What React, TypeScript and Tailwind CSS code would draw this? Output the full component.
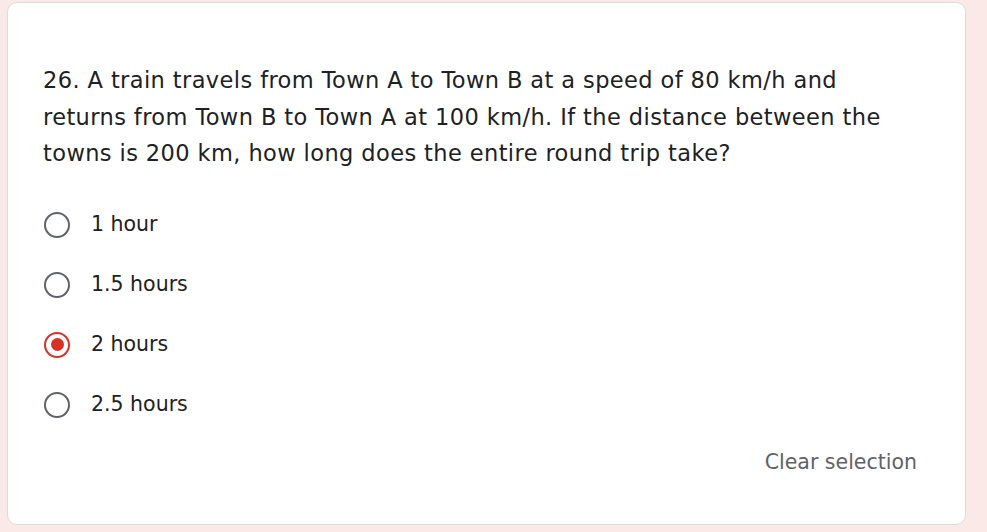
const options = ['1 hour', '1.5 hours', '2 hours', '2.5 hours'];

function Radio({checked}: {checked: boolean}) {
  return (
    <span
      className={
        'flex h-[26px] w-[26px] shrink-0 items-center justify-center rounded-full border-[2.5px] ' +
        (checked ? 'border-[#d93025]' : 'border-[#5f6368]')
      }
    >
      {checked && <span className="h-[13px] w-[13px] rounded-full bg-[#d93025]" />}
    </span>
  );
}

export default function App() {
  const selected = '2 hours';
  return (
    <div className="min-h-[532px] w-full bg-[#fbe9e7] pl-[7px] pr-[21px] pt-[2px] pb-[7px] font-['DejaVu_Sans',sans-serif]">
      <div className="h-[523px] rounded-[10px] border border-[#dadce0] bg-white pl-[35px] pr-[36px] pt-[59px]">
        <p className="pr-[14px] text-[22.5px] leading-[36.5px] tracking-[0.4px] text-[#202124]">
          26. A train travels from Town A to Town B at a speed of 80 km/h and returns from Town B to
          Town A at 100 km/h. If the distance between the towns is 200 km, how long does the entire
          round trip take?
        </p>

        <div className="mt-[40px] flex flex-col gap-[34px]">
          {options.map((o) => (
            <label key={o} className="flex h-[26px] items-center gap-[21px] pl-[1px]">
              <Radio checked={o === selected} />
              <span className="text-[20.5px] text-[#202124]">{o}</span>
            </label>
          ))}
        </div>

        <div className="mt-[29px] flex justify-end pr-[12px]">
          <button className="text-[20.5px] font-medium text-[#5f6368]">Clear selection</button>
        </div>
      </div>
    </div>
  );
}
